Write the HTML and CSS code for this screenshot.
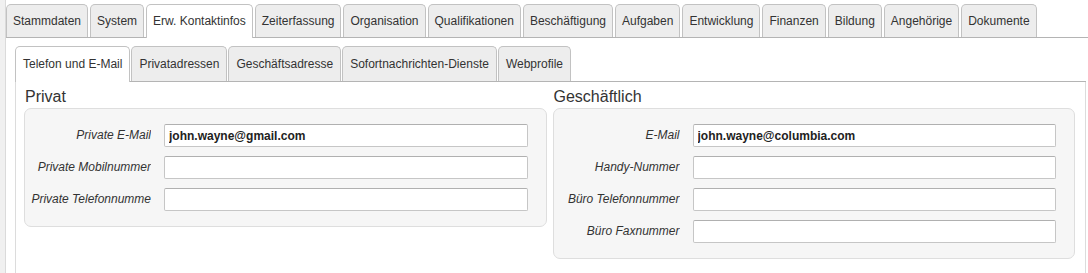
FILE: index.html
```html
<!DOCTYPE html>
<html>
<head>
  <meta charset="UTF-8"/>
  <title>Erw. Kontaktinfos</title>
  <link rel="stylesheet" href="styles.css">
</head>
<body>
  <div class="page">
    <ul class="tabs mainTabs">
      <li>Stammdaten</li>
      <li>System</li>
      <li class="active">Erw. Kontaktinfos</li>
      <li>Zeiterfassung</li>
      <li>Organisation</li>
      <li>Qualifikationen</li>
      <li>Beschäftigung</li>
      <li>Aufgaben</li>
      <li>Entwicklung</li>
      <li>Finanzen</li>
      <li>Bildung</li>
      <li>Angehörige</li>
      <li>Dokumente</li>
    </ul>

    <div class="subArea">
      <ul class="tabs subTabs">
        <li class="active">Telefon und E-Mail</li>
        <li>Privatadressen</li>
        <li>Geschäftsadresse</li>
        <li>Sofortnachrichten-Dienste</li>
        <li>Webprofile</li>
      </ul>

      <div class="panel">
        <div class="group">
          <h3>Privat</h3>
          <div class="box">
            <label>Private E-Mail</label>
            <input type="text" value="john.wayne@gmail.com">
            <label>Private Mobilnummer</label>
            <input type="text" value="">
            <label>Private Telefonnumme</label>
            <input type="text" value="">
          </div>
        </div>
        <div class="group">
          <h3>Geschäftlich</h3>
          <div class="box">
            <label>E-Mail</label>
            <input type="text" value="john.wayne@columbia.com">
            <label>Handy-Nummer</label>
            <input type="text" value="">
            <label>Büro Telefonnummer</label>
            <input type="text" value="">
            <label>Büro Faxnummer</label>
            <input type="text" value="">
          </div>
        </div>
      </div>
    </div>
  </div>
</body>
</html>
```

FILE: styles.css
```css
body {
  margin: 0;
  background: #f0f0f0;
  font-size: 12px;
  font-family: "Liberation Sans", Arial, sans-serif;
  color: #333;
}
div.page {
  margin-left: 5px;
  min-height: 100vh;
  background: #fff;
  border-left: 1px solid #dadada;
}

ul.tabs {
  display: flex;
  align-items: flex-end;
  margin: 0;
  padding: 0;
  list-style: none;
  border-bottom: 1px solid #b4b4b4;
}
ul.tabs li {
  padding: 0 6px;
  background: #ededed;
  border: 1px solid #c2c2c2;
  border-bottom: none;
  border-radius: 5px 5px 0 0;
  color: #333;
  white-space: nowrap;
}
ul.tabs li.active {
  background: #fff;
  margin-bottom: -1px;
  padding-bottom: 1px;
}

ul.mainTabs {
  padding-top: 4px;
}
ul.mainTabs li {
  line-height: 32px;
  margin-right: 2px;
}

div.subArea {
  margin: 8px 2px 0 9px;
}
ul.subTabs li {
  padding: 0 7px;
  line-height: 34px;
  margin-right: 1px;
}

div.panel {
  display: grid;
  grid-template-columns: 1fr 1fr;
  column-gap: 6px;
  align-items: start;
  padding: 6px 10px 30px 8px;
  border: 1px solid #dcdcdc;
  border-top: none;
}
div.group h3 {
  margin: 0 0 2px 0;
  padding-left: 1px;
  font-size: 16px;
  font-weight: normal;
  line-height: 18px;
  color: #333;
}
div.box {
  display: grid;
  grid-template-columns: 120px 1fr;
  column-gap: 13px;
  row-gap: 9px;
  padding: 15px 18px 15px 6px;
  background: #f6f6f6;
  border: 1px solid #dedede;
  border-radius: 7px;
}
div.box label {
  text-align: right;
  font-style: italic;
  line-height: 23px;
  white-space: nowrap;
  overflow: hidden;
  color: #333;
}
div.box input {
  box-sizing: border-box;
  height: 23px;
  margin: 0;
  padding: 0 4px;
  border: 1px solid #c6c6c6;
  border-top-color: #b0b0b0;
  border-radius: 2px;
  background: #fff;
  font-family: "Liberation Sans", Arial, sans-serif;
  font-size: 12px;
  font-weight: bold;
  color: #222;
}
```
